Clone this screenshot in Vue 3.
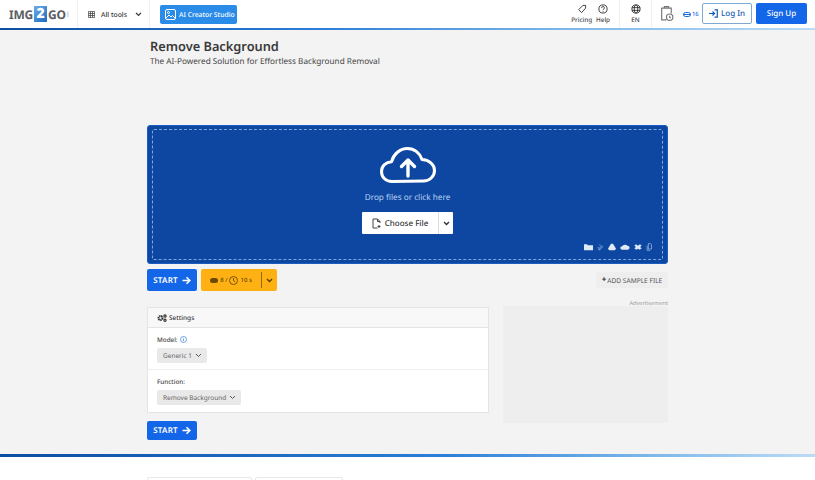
<script setup>
const cloudIcons = [
  'M0 2h4l1 1.500h7V11H0z',
  'M3 9l5-5 1.500 1.500-5 5H3zM4 3h2M2 6v2',
  'M4.500 1h3l4.500 7.500-1.800 2.500H1.800L0 8.500z',
  'M3 10a2.500 2.500 0 0 1-.3-5A3.500 3.500 0 0 1 9 4.200 3 3 0 0 1 9.500 10z',
  'M3 2l3 2 3-2 2.500 2-2.500 2 2.500 2-3 2-2.500-1.500L3.500 10l-3-2 2.500-2L.5 4z',
  'M4 1h4l1.500 1.500V9H4zM2 4v7h5',
]
const sourceWidths = [9, 7, 8, 10, 8, 7]
</script>

<template>
  <div class="page">
    <header class="top">
      <div class="logo"><span>IMG</span><b>2</b><span>GO</span><i>.com</i></div>
      <div class="alltools">
        <svg width="7" height="7" viewBox="0 0 9 9" fill="none" stroke="#444" stroke-width="1"><path d="M.5.5h8v8h-8zM.5 3.200h8M.5 5.800h8M3.200.5v8M5.800.5v8"/></svg>
        <span>All tools</span>
        <svg class="chev" width="7" height="5" viewBox="0 0 8 6" fill="none" stroke="#333" stroke-width="1.500"><path d="M1 1l3 3 3-3"/></svg>
      </div>
      <button class="studio">
        <svg width="11" height="11" viewBox="0 0 11 11" fill="none" stroke="#fff" stroke-width="1"><rect x=".5" y=".5" width="10" height="10" rx="1.500"/><circle cx="3.500" cy="3.500" r="1"/><path d="M1 9l3-3 2 2 1.500-1.500L10 9"/></svg>
        <span>AI Creator Studio</span>
      </button>
      <div class="spacer"></div>
      <div class="mini">
        <svg width="10" height="10" viewBox="0 0 11 11" fill="none" stroke="#333" stroke-width="1"><path d="M6.500 1.500h3v3L5 9.500 1.800 6.300z"/></svg>
        <span>Pricing</span>
      </div>
      <div class="mini help">
        <svg width="10" height="10" viewBox="0 0 11 11" fill="none" stroke="#333" stroke-width="1"><circle cx="5.500" cy="5.500" r="4.500"/><path d="M4 4.300a1.500 1.500 0 1 1 2 1.400c-.4.200-.5.500-.5 1M5.500 7.600v1"/></svg>
        <span>Help</span>
      </div>
      <div class="mini lang">
        <svg width="10" height="10" viewBox="0 0 11 11" fill="none" stroke="#333" stroke-width="1"><circle cx="5.500" cy="5.500" r="4.500"/><ellipse cx="5.500" cy="5.500" rx="2" ry="4.500"/><path d="M1 4h9M1 7h9"/></svg>
        <span>EN</span>
      </div>
      <div class="clip">
        <svg width="14" height="17" viewBox="0 0 13 16" fill="none" stroke="#777" stroke-width="1.100"><path d="M6 14H1.500V3h9v5M4 3V1.500h4V3"/><circle cx="9" cy="11.500" r="3"/><path d="M9 10v1.600l1 .6"/></svg>
      </div>
      <div class="credits">
        <svg width="8" height="5" viewBox="0 0 8 5" fill="none" stroke="#1769e0" stroke-width="1"><rect x=".5" y=".5" width="7" height="4" rx="2"/><path d="M.5 2.500h7"/></svg>
        <span>16</span>
      </div>
      <button class="login">
        <svg width="9" height="9" viewBox="0 0 9 9" fill="none" stroke="#125cb3" stroke-width="1.200"><path d="M0 4.500h5M3.500 2.500l2 2-2 2M5.500.8h2.800v7.400H5.500"/></svg>
        <span>Log In</span>
      </button>
      <button class="signup">Sign Up</button>
    </header>

    <main class="main">
      <div class="wrap">
        <h1>Remove Background</h1>
        <p class="sub">The AI-Powered Solution for Effortless Background Removal</p>

        <section class="drop">
          <div class="dash">
            <svg class="cloud" width="56" height="36" viewBox="0 0 56 36" fill="none" stroke="#fff" stroke-width="3" stroke-linecap="round" stroke-linejoin="round">
              <path d="M12 34.500C5.500 34.500 1.500 30 1.500 24.500 1.500 19 6 15 11.500 14.800 13.500 7 20 1.500 27.500 1.500c7 0 12.500 4.500 14.500 11 7 .3 12.500 5 12.500 11 0 6-5 10.500-11 10.500z"/>
              <path d="M28 29V13M21.500 19.500L28 13l6.500 6.500" stroke-width="3.400"/>
            </svg>
            <div class="droptxt">Drop files or click here</div>
            <div class="choose">
              <div class="cmain">
                <svg width="9" height="11" viewBox="0 0 9 11" fill="none" stroke="#444" stroke-width="1"><path d="M5.500 10H1V1h4.500L8 3.500V5M5.500 1v2.500H8M7 7v3M5.500 8.500h3"/></svg>
                <span>Choose File</span>
              </div>
              <div class="csplit">
                <svg width="7" height="5" viewBox="0 0 7 5" fill="none" stroke="#333" stroke-width="1.400"><path d="M1 1l2.500 2.500L6 1"/></svg>
              </div>
            </div>
            <div class="sources">
              <svg v-for="(d, i) in cloudIcons" :key="i" :width="sourceWidths[i]" height="8" viewBox="0 0 12 12" preserveAspectRatio="none" :fill="i === 1 || i === 5 ? 'none' : '#dfe9f7'" stroke="#b9d2f2" :stroke-width="i === 1 || i === 5 ? 1 : 0"><path :d="d" fill-rule="evenodd"/></svg>
            </div>
          </div>
        </section>

        <div class="actions">
          <button class="start">START <svg width="9" height="9" viewBox="0 0 9 9" fill="none" stroke="#fff" stroke-width="1.600"><path d="M.5 4.500h7M4.500 1.200l3.300 3.300-3.300 3.300"/></svg></button>
          <div class="cost">
            <div class="costl">
              <svg width="8" height="5" viewBox="0 0 8 5" fill="#6b4a00"><rect width="8" height="5" rx="2.500"/></svg>
              <span>8 /</span>
              <svg width="9" height="9" viewBox="0 0 9 9" fill="none" stroke="#6b4a00" stroke-width=".9"><circle cx="4.500" cy="4.500" r="4"/><path d="M4.500 2v2.700l1.700 1"/></svg>
              <span>10 s</span>
            </div>
            <div class="costr">
              <svg width="7" height="5" viewBox="0 0 7 5" fill="none" stroke="#5a4000" stroke-width="1.400"><path d="M1 1l2.500 2.500L6 1"/></svg>
            </div>
          </div>
          <div class="spacer"></div>
          <button class="sample"><b>+</b>ADD SAMPLE FILE</button>
        </div>

        <div class="lower">
          <div class="left">
            <div class="card">
              <div class="chead">
                <svg width="10" height="8" viewBox="0 0 10 8" fill="none" stroke="#333"><circle cx="3.500" cy="4" r="2" stroke-width="2" stroke-dasharray="1.300 .5"/><circle cx="8" cy="2" r="1.100" stroke-width="1.200"/><circle cx="8" cy="6.300" r="1.100" stroke-width="1.200"/></svg>
                <span>Settings</span>
              </div>
              <div class="field">
                <label>Model:
                  <svg width="7" height="7" viewBox="0 0 7 7" fill="none" stroke="#4a90e2" stroke-width=".8"><circle cx="3.500" cy="3.500" r="3"/><path d="M3.500 3v2.200M3.500 1.700v.7"/></svg>
                </label>
                <div class="sel">Generic 1
                  <svg width="7" height="5" viewBox="0 0 7 5" fill="none" stroke="#555" stroke-width="1"><path d="M1 1l2.500 2.500L6 1"/></svg>
                </div>
              </div>
              <div class="field second">
                <label>Function:</label>
                <div class="sel">Remove Background
                  <svg width="7" height="5" viewBox="0 0 7 5" fill="none" stroke="#555" stroke-width="1"><path d="M1 1l2.500 2.500L6 1"/></svg>
                </div>
              </div>
            </div>
            <button class="start bottom">START <svg width="9" height="9" viewBox="0 0 9 9" fill="none" stroke="#fff" stroke-width="1.600"><path d="M.5 4.500h7M4.500 1.200l3.300 3.300-3.300 3.300"/></svg></button>
          </div>
          <aside class="ad">
            <div class="adl">Advertisement</div>
            <div class="adbox"></div>
          </aside>
        </div>
      </div>
    </main>

    <footer class="foot">
      <div class="fwrap">
        <div class="fbox a"></div>
        <div class="fbox b"></div>
      </div>
    </footer>
  </div>
</template>

<style>
html, body { margin: 0; background: #fff; overflow: hidden; }
</style>

<style scoped>
.page { width: 815px; height: 480px; overflow: hidden; font-family: "Noto Sans", "Open Sans", sans-serif; color: #333; display: flex; flex-direction: column; text-rendering: geometricPrecision; }
button { font-family: inherit; border: 0; padding: 0; text-rendering: geometricPrecision; }
svg { display: block; flex: none; }
.spacer { flex: 1; }

.top { height: 28px; flex: none; background: #fff; display: flex; align-items: center; border-bottom: 2px solid; border-image: linear-gradient(90deg, #0b4ea2 0, #2d7fd8 40%, #7db8ea 70%, #bcdcf5 100%) 1; }
.logo { width: 78px; height: 28px; flex: none; box-sizing: border-box; padding-left: 9px; display: flex; align-items: center; font-size: 12px; font-weight: 700; color: #5a5e63; border-right: 1px solid #f0f0f0; letter-spacing: -.2px; }
.logo b { width: 13px; height: 16px; line-height: 16px; text-align: center; margin: 0 1px; background: linear-gradient(135deg, #6cb0ea, #1b67bd); color: #fff; font-size: 14px; }
.logo i { font-size: 3px; font-style: normal; color: #999; writing-mode: vertical-rl; font-weight: 400; }
.alltools { width: 72px; height: 28px; flex: none; box-sizing: border-box; padding-left: 10px; display: flex; align-items: center; gap: 6px; font-size: 6.800px; font-weight: 500; border-right: 1px solid #f0f0f0; color: #333; }
.alltools .chev { margin-left: 2px; }
.studio { margin-left: 10px; width: 77px; height: 19px; background: #2a8be8; border-radius: 2px; color: #fff; display: flex; align-items: center; gap: 3px; padding-left: 5px; box-sizing: border-box; font-size: 6.800px; font-weight: 500; }
.mini { display: flex; flex-direction: column; align-items: center; gap: 1px; font-size: 6.300px; font-weight: 500; color: #444; height: 28px; justify-content: center; box-sizing: border-box; }
.help { margin-left: 4px; padding-right: 9px; border-right: 1px solid #f0f0f0; }
.lang { width: 32px; border-right: 1px solid #f0f0f0; }
.clip { margin-left: 8px; width: 19px; margin-top: -2px; }
.credits { display: flex; align-items: center; gap: 1px; font-size: 5.800px; color: #1769e0; width: 18px; margin-left: 4px; font-weight: 500; }
.login { margin-left: 1px; margin-top: -1px; width: 50px; height: 21px; box-sizing: border-box; border: 1px solid #7fa9d2; border-radius: 2px; background: #fff; color: #125cb3; font-size: 8px; font-weight: 500; display: flex; align-items: center; justify-content: center; gap: 3px; }
.signup { margin: -1px 8px 0 4px; width: 51px; height: 21px; background: #1366e8; border-radius: 2px; color: #fff; font-size: 8px; font-weight: 500; }

.main { height: 424px; flex: none; background: #f3f3f3; border-bottom: 3px solid; border-image: linear-gradient(90deg, #0b4ea2 0, #2d7fd8 55%, #7db8ea 80%, #bcdcf5 100%) 1; box-sizing: content-box; }
.wrap { width: 521px; margin-left: 147px; padding-top: 8px; }
h1 { margin: 0 0 0 3px; font-size: 12.800px; line-height: 17px; font-weight: 600; color: #3a3a3a; }
.sub { margin: 1px 0 0 3px; font-size: 8.200px; line-height: 11px; color: #444; }

.drop { margin-top: 58px; height: 139px; box-sizing: border-box; background: #0d47a1; border-radius: 3px; padding: 3px 4px; border: 1px solid #1a5cc0; }
.dash { height: 100%; box-sizing: border-box; border: 1px dashed #7fa6de; border-radius: 2px; display: flex; flex-direction: column; align-items: center; position: relative; padding-top: 17px; }
.droptxt { margin-top: 9px; font-size: 8.200px; line-height: 11px; color: #b9d2f2; }
.choose { margin-top: 9px; height: 22px; display: flex; background: #fff; border-radius: 1px; }
.cmain { width: 76px; display: flex; align-items: center; justify-content: center; gap: 4px; font-size: 8px; font-weight: 500; color: #333; border-right: 1px solid #ddd; }
.csplit { width: 14px; display: flex; align-items: center; justify-content: center; }
.sources { position: absolute; right: 9px; bottom: 8px; display: flex; gap: 4px; }

.actions { margin-top: 5px; height: 22px; display: flex; align-items: center; }
.start { width: 50px; height: 22px; background: #1366e8; border-radius: 2px; color: #fff; font-size: 8px; font-weight: 600; display: flex; align-items: center; justify-content: center; gap: 4px; letter-spacing: .2px; }
.cost { margin-left: 4px; height: 22px; width: 76px; background: #ffb114; border-radius: 2px; display: flex; color: #6b4a00; font-size: 6px; font-weight: 500; }
.costl { width: 60px; display: flex; align-items: center; justify-content: center; gap: 2px; border-right: 1px solid #8a6a10; margin: 3px 0; }
.costr { flex: 1; display: flex; align-items: center; justify-content: center; }
.sample { width: 72px; height: 16px; background: #eeeeee; color: #555; font-size: 6.600px; border-radius: 1px; display: flex; align-items: center; justify-content: center; gap: 1px; }
.sample b { color: #222; font-size: 8px; line-height: 8px; }

.lower { display: flex; margin-top: 8px; }
.left { width: 342px; flex: none; }
.card { margin-top: 8px; height: 106px; box-sizing: border-box; border: 1px solid #e4e4e4; background: #fff; }
.chead { height: 19px; background: #f8f8f8; border-bottom: 1px solid #e4e4e4; display: flex; align-items: center; gap: 2px; padding-left: 9px; font-size: 6.500px; font-weight: 500; color: #333; }
.field { height: 42px; box-sizing: border-box; padding: 7px 9px 0; border-bottom: 1px solid #eee; }
.field.second { border: 0; }
label { display: flex; align-items: center; gap: 2px; font-size: 6.300px; line-height: 9px; font-weight: 500; color: #444; }
.sel { margin-top: 4px; height: 15px; width: fit-content; padding: 0 5px 0 6px; background: #e9e9e9; border-radius: 2px; display: flex; align-items: center; gap: 3px; font-size: 6.500px; color: #666; }
.bottom { margin-top: 8px; height: 19px; }
.ad { margin-left: 14px; width: 165px; }
.adl { text-align: right; font-size: 5.600px; line-height: 9px; height: 7px; color: #999; }
.adbox { height: 117px; background: #eeeeee; }

.foot { flex: 1; background: #fff; }
.fwrap { display: flex; gap: 3px; margin-left: 147px; padding-top: 20px; }
.fbox { height: 10px; border: 1px solid #e8e8e8; box-sizing: border-box; border-radius: 2px; }
.a { width: 105px; }
.b { width: 88px; }
</style>
